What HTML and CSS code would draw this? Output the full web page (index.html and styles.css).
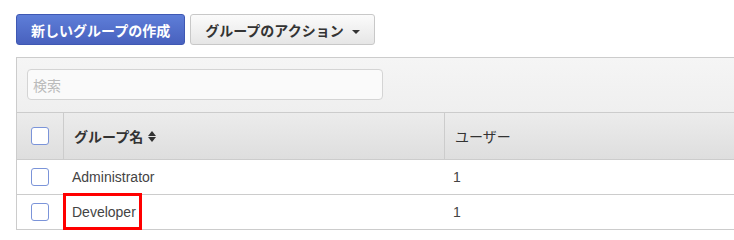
FILE: index.html
```html
<!DOCTYPE html>
<html lang="ja">
<head>
  <meta charset="UTF-8">
  <title>グループ</title>
  <link rel="stylesheet" href="styles.css">
</head>
<body>
  <div class="page">
    <div class="toolbar">
      <button class="btn btn-primary">新しいグループの作成</button>
      <button class="btn btn-default">グループのアクション <span class="caret"></span></button>
    </div>

    <div class="panel">
      <div class="filter">
        <input class="search" type="text" placeholder="検索">
      </div>

      <div class="table">
        <div class="row head">
          <div class="cell check"><span class="checkbox"></span></div>
          <div class="cell name">グループ名 <span class="sort"></span></div>
          <div class="cell users">ユーザー</div>
        </div>
        <div class="row">
          <div class="cell check"><span class="checkbox"></span></div>
          <div class="cell name">Administrator</div>
          <div class="cell users">1</div>
        </div>
        <div class="row">
          <div class="cell check"><span class="checkbox"></span></div>
          <div class="cell name">Developer<span class="highlight"></span></div>
          <div class="cell users">1</div>
        </div>
      </div>
    </div>
  </div>
</body>
</html>
```

FILE: styles.css
```css
body {
  margin: 0;
  font-family: "Liberation Sans", "Noto Sans CJK JP", sans-serif;
  color: #444;
  background: #fff;
}

.page {
  padding: 14px 0 0 16px;
}

/* Buttons */
.toolbar {
  display: flex;
  gap: 5px;
}

.btn {
  height: 31px;
  padding: 0 14px;
  font-family: "Noto Sans CJK JP", sans-serif;
  font-size: 14px;
  font-weight: bold;
  border-radius: 3px;
  cursor: pointer;
}

.btn-primary {
  color: #fff;
  background: linear-gradient(#5e7ed8, #4861be);
  border: 1px solid #3f58b3;
}

.btn-default {
  color: #333;
  background: linear-gradient(#fbfbfb, #e6e6e6);
  border: 1px solid #c8c8c8;
}

.caret {
  display: inline-block;
  margin-left: 5px;
  vertical-align: middle;
  border-top: 4px solid #333;
  border-left: 4px solid transparent;
  border-right: 4px solid transparent;
}

/* Panel */
.panel {
  margin-top: 12px;
  border-top: 1px solid #ccc;
  border-left: 1px solid #ccc;
}

.filter {
  padding: 11px 10px 12px;
  background: linear-gradient(#f5f5f5, #efefef);
}

.search {
  box-sizing: border-box;
  width: 356px;
  height: 31px;
  padding: 0 5px;
  font-family: "Noto Sans CJK JP", sans-serif;
  font-size: 14px;
  background: #fafafa;
  border: 1px solid #d4d4d4;
  border-radius: 4px;
}

.search::placeholder {
  color: #bbb;
}

/* Table */
.table {
  border-top: 1px solid #ccc;
}

.row {
  display: flex;
  height: 34px;
  border-bottom: 1px solid #ccc;
  font-size: 14px;
}

.row.head {
  height: 46px;
  background: linear-gradient(#ececec, #dedede);
  font-family: "Noto Sans CJK JP", sans-serif;
  color: #333;
}

.cell {
  display: flex;
  align-items: center;
}

.check {
  width: 46px;
  justify-content: center;
}

.name {
  position: relative;
  width: 380px;
  padding-left: 9px;
  box-sizing: border-box;
}

.users {
  flex: 1;
  padding-left: 10px;
}

.head .check,
.head .name {
  border-right: 1px solid #ccc;
}

.head .name {
  width: 381px;
  padding-left: 10px;
  font-weight: 600;
}

.checkbox {
  box-sizing: border-box;
  width: 18px;
  height: 18px;
  background: #fff;
  border: 1px solid #7b94d9;
  border-radius: 3px;
}

.sort {
  display: inline-block;
  position: relative;
  width: 8px;
  height: 11px;
  margin-left: 5px;
}

.sort::before,
.sort::after {
  content: "";
  position: absolute;
  left: 0;
  border-left: 4px solid transparent;
  border-right: 4px solid transparent;
}

.sort::before {
  top: 0;
  border-bottom: 5px solid #333;
}

.sort::after {
  bottom: 0;
  border-top: 5px solid #333;
}

/* Highlight box over the Developer name */
.highlight {
  position: absolute;
  left: 0;
  top: -2px;
  width: 79px;
  height: 37px;
  box-sizing: border-box;
  border: 3px solid #f00;
}
```
